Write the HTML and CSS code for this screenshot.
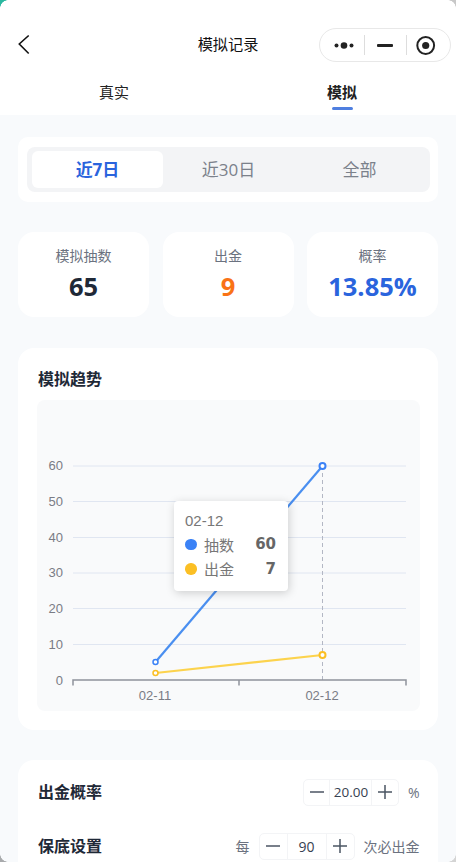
FILE: index.html
```html
<!DOCTYPE html>
<html lang="zh">
<head>
<meta charset="utf-8">
<title>模拟记录</title>
<link rel="stylesheet" href="styles.css">
</head>
<body>
<div class="window">
  <header class="topbar">
    <div class="navbar">
      <svg class="back" width="14" height="22" viewBox="0 0 14 22"><path d="M11.7 2.500 L2.300 11 L11.700 20.500" fill="none" stroke="#111" stroke-width="1.600"/></svg>
      <div class="nav-title">模拟记录</div>
      <div class="capsule">
        <svg class="cap-ic" width="44" height="12" viewBox="0 0 44 12"><circle cx="16.500" cy="6.500" r="2" fill="#222"/><circle cx="24" cy="6.500" r="3.300" fill="#222"/><circle cx="31.500" cy="6.500" r="2" fill="#222"/></svg>
        <span class="cap-sep"></span>
        <svg class="cap-ic" width="41" height="12" viewBox="0 0 41 12"><rect x="12" y="5" width="16" height="3" rx="1" fill="#222"/></svg>
        <span class="cap-sep"></span>
        <svg class="cap-ic" width="40" height="22" viewBox="0 0 40 22"><circle cx="18.700" cy="11.500" r="8.400" fill="none" stroke="#222" stroke-width="2"/><circle cx="18.700" cy="11.500" r="3.600" fill="#222"/></svg>
      </div>
    </div>
    <nav class="tabs">
      <div class="tab">真实</div>
      <div class="tab tab-on">模拟</div>
    </nav>
  </header>

  <main class="content">
    <section class="card range-card">
      <div class="range">
        <div class="range-item range-on">近7日</div>
        <div class="range-item">近30日</div>
        <div class="range-item">全部</div>
      </div>
    </section>

    <section class="stats">
      <div class="stat"><div class="stat-label">模拟抽数</div><div class="stat-value">65</div></div>
      <div class="stat"><div class="stat-label">出金</div><div class="stat-value orange">9</div></div>
      <div class="stat"><div class="stat-label">概率</div><div class="stat-value blue">13.85%</div></div>
    </section>

    <section class="card chart-card">
      <h2 class="card-title">模拟趋势</h2>
      <div class="chart">
        <svg class="chart-svg" width="383" height="311" viewBox="0 0 383 311">
          <g class="grid">
            <line x1="36" x2="369" y1="66" y2="66"/>
            <line x1="36" x2="369" y1="101.500" y2="101.500"/>
            <line x1="36" x2="369" y1="137.500" y2="137.500"/>
            <line x1="36" x2="369" y1="173" y2="173"/>
            <line x1="36" x2="369" y1="208.500" y2="208.500"/>
            <line x1="36" x2="369" y1="244.500" y2="244.500"/>
          </g>
          <g class="ylabels">
            <text x="26" y="70">60</text>
            <text x="26" y="105.500">50</text>
            <text x="26" y="141.500">40</text>
            <text x="26" y="177">30</text>
            <text x="26" y="212.500">20</text>
            <text x="26" y="248.500">10</text>
            <text x="26" y="284.500">0</text>
          </g>
          <line class="pointer" x1="285.500" x2="285.500" y1="66" y2="280"/>
          <path class="axis" d="M36 285.500 V280 H369 V285.500 M202 280 V285.500"/>
          <g class="xlabels">
            <text x="118" y="300">02-11</text>
            <text x="285" y="300">02-12</text>
          </g>
          <polyline class="line-blue" points="118.500,262 285.500,66"/>
          <polyline class="line-gold" points="118.500,273 285.500,255"/>
          <circle class="dot-blue" cx="118.500" cy="262" r="2.500"/>
          <circle class="dot-blue big" cx="285.500" cy="66" r="3"/>
          <circle class="dot-gold" cx="118.500" cy="273" r="2.500"/>
          <circle class="dot-gold big" cx="285.500" cy="255" r="3"/>
        </svg>
        <div class="tooltip">
          <div class="tip-head">02-12</div>
          <div class="tip-row"><span class="tip-dot tip-blue"></span><span class="tip-name">抽数</span><b class="tip-val">60</b></div>
          <div class="tip-row"><span class="tip-dot tip-gold"></span><span class="tip-name">出金</span><b class="tip-val">7</b></div>
        </div>
      </div>
    </section>

    <section class="card settings">
      <div class="set-row row-a">
        <div class="card-title">出金概率</div>
        <div class="set-ctl">
          <div class="stepper">
            <span class="step-btn">
              <svg width="14" height="14" viewBox="0 0 14 14"><path d="M0 7H14" stroke="#4b5563" stroke-width="1.500"/></svg>
            </span>
            <span class="step-val wide">20.00</span>
            <span class="step-btn">
              <svg width="14" height="14" viewBox="0 0 14 14"><path d="M0 7H14M7 0V14" stroke="#4b5563" stroke-width="1.500"/></svg>
            </span>
          </div>
          <span class="unit">%</span>
        </div>
      </div>
      <div class="set-row">
        <div class="card-title">保底设置</div>
        <div class="set-ctl">
          <span class="unit">每</span>
          <div class="stepper">
            <span class="step-btn">
              <svg width="14" height="14" viewBox="0 0 14 14"><path d="M0 7H14" stroke="#4b5563" stroke-width="1.500"/></svg>
            </span>
            <span class="step-val">90</span>
            <span class="step-btn">
              <svg width="14" height="14" viewBox="0 0 14 14"><path d="M0 7H14M7 0V14" stroke="#4b5563" stroke-width="1.500"/></svg>
            </span>
          </div>
          <span class="unit">次必出金</span>
        </div>
      </div>
    </section>
  </main>
  <span class="corner corner-tl"></span>
  <span class="corner corner-tr"></span>
  <span class="corner corner-bl"></span>
  <span class="corner corner-br"></span>
</div>
</body>
</html>
```

FILE: styles.css
```css
* { box-sizing: border-box; }
html, body { margin: 0; padding: 0; }
body {
  width: 456px;
  height: 862px;
  overflow: hidden;
  font-family: "Open Sans", "Noto Sans CJK SC", sans-serif;
  color: #1f2937;
  background: #f8fafc;
}
.window { position: relative; width: 456px; height: 862px; overflow: hidden; }

.topbar { background: #fff; height: 115px; }
.navbar {
  position: relative;
  height: 76px;
  padding: 28px 5px 0 0;
  display: flex;
  justify-content: flex-end;
}
.back { position: absolute; left: 17px; top: 33px; }
.nav-title {
  position: absolute;
  left: 0;
  right: 0;
  top: 33px;
  text-align: center;
  font-size: 15.200px;
  line-height: 22px;
  color: #111;
}
.capsule {
  width: 132px;
  height: 34px;
  border: 1px solid #e8e8e8;
  border-radius: 17px;
  display: flex;
  align-items: center;
  background: #fff;
}
.cap-ic { flex: none; }
.cap-sep { width: 1px; height: 20px; background: #ddd; flex: none; }

.tabs { display: flex; height: 39px; }
.tab {
  position: relative;
  flex: 1;
  text-align: center;
  font-size: 15px;
  line-height: 22px;
  padding-top: 5px;
  color: #222;
}
.tab:first-child { flex: 0 0 228px; }
.tab-on { font-weight: 700; }
.tab-on::after {
  content: "";
  position: absolute;
  left: 104px;
  top: 31px;
  width: 21px;
  height: 3px;
  border-radius: 2px;
  background: #4f7fe0;
}

.content { padding: 22px 18px 0; }
.card { background: #fff; }

.range-card { height: 65px; border-radius: 10px; padding: 10px 8px 10px 9px; }
.range {
  height: 45px;
  background: #f3f4f6;
  border-radius: 8px;
  padding: 4px 5px;
  display: flex;
}
.range-item {
  flex: 1;
  text-align: center;
  font-size: 17px;
  line-height: 37px;
  color: #7b818b;
  border-radius: 6px;
}
.range-on { background: #fff; color: #2a64dd; font-weight: 700; }

.stats { display: flex; gap: 13.500px; margin-top: 30px; }
.stat {
  flex: 1 1 0;
  height: 85px;
  background: #fff;
  border-radius: 16px;
  text-align: center;
  padding-top: 14px;
}
.stat-label { font-size: 14px; line-height: 20px; color: #6b7280; }
.stat-value { font-size: 25.500px; line-height: 34px; font-weight: 700; color: #1f2937; margin-top: 3px; }
.orange { color: #f97316; }
.blue { color: #2a64dd; }

.chart-card { margin-top: 31px; height: 382px; border-radius: 16px; padding: 19px 19px 0; }
.card-title { font-size: 16px; line-height: 24px; font-weight: 700; color: #1f2937; margin: 0 0 0 1px; }
.chart {
  position: relative;
  margin-top: 9px;
  width: 383px;
  height: 311px;
  background: #f9fafb;
  border-radius: 8px;
}
.chart-svg { display: block; font-family: "Liberation Sans", sans-serif; font-size: 13px; }
.grid line { stroke: #e0e6f1; stroke-width: 1; }
.ylabels text { fill: #7a7c85; text-anchor: end; }
.xlabels text { fill: #7a7c85; text-anchor: middle; }
.pointer { stroke: #b3b7c4; stroke-width: 1; stroke-dasharray: 4 3; }
.axis { fill: none; stroke: #8f939c; stroke-width: 1.500; }
.line-blue { fill: none; stroke: #4a8ff0; stroke-width: 2.200; }
.line-gold { fill: none; stroke: #fcd34d; stroke-width: 2.200; }
.dot-blue { fill: #fff; stroke: #3b82f6; stroke-width: 1.500; }
.dot-gold { fill: #fff; stroke: #fbbf24; stroke-width: 1.500; }
.big { stroke-width: 2; }

.tooltip {
  position: absolute;
  left: 137px;
  top: 100.500px;
  width: 114px;
  height: 90px;
  background: #fff;
  border-radius: 4px;
  box-shadow: 1px 2px 10px rgba(0,0,0,.18);
  padding: 11px 12px 0 11px;
  font-family: "Liberation Sans", "Noto Sans CJK SC", sans-serif;
  font-size: 15px;
  color: #777;
}
.tip-head { line-height: 18px; height: 18px; margin-bottom: 2.500px; }
.tip-row { display: flex; align-items: center; height: 24.500px; }
.tip-dot { width: 11.500px; height: 11.500px; border-radius: 50%; margin-right: 7.500px; flex: none; }
.tip-blue { background: #3b82f6; }
.tip-gold { background: #fbbf24; }
.tip-name { flex: 1; }
.tip-val { font-family: "DejaVu Sans", sans-serif; font-size: 15px; font-weight: 700; color: #666; }

.settings {
  margin-top: 30px;
  height: 160px;
  border-radius: 16px;
  padding: 18.500px 18.500px 0 19px;
}
.set-row { display: flex; align-items: center; justify-content: space-between; height: 27px; }
.row-a { margin-bottom: 27px; }
.set-ctl { display: flex; align-items: center; gap: 9px; }
.stepper {
  display: flex;
  align-items: center;
  width: 96px;
  height: 27px;
  border: 1px solid #f3f4f6;
  border-radius: 5px;
}
.step-btn {
  flex: 1;
  height: 25px;
  display: flex;
  align-items: center;
  justify-content: center;
}
.step-val {
  flex: none;
  width: 40px;
  height: 25px;
  line-height: 25px;
  text-align: center;
  font-size: 14px;
  color: #374151;
  border-left: 1px solid #f3f4f6;
  border-right: 1px solid #f3f4f6;
}
.step-val.wide { width: 43px; font-size: 13.500px; }
.unit { font-size: 14px; color: #6b7280; }

.corner { position: absolute; width: 8px; height: 8px; }
.corner-tl { left: 0; top: 0; background: radial-gradient(circle at 100% 100%, transparent 7.500px, #2bb8a0 8px); }
.corner-tr { right: 0; top: 0; background: radial-gradient(circle at 0 100%, transparent 7.500px, #c8c8c8 8px); }
.corner-bl { left: 0; bottom: 0; background: radial-gradient(circle at 100% 0, transparent 7.500px, #a8aaac 8px); }
.corner-br { right: 0; bottom: 0; background: radial-gradient(circle at 0 0, transparent 7.500px, #d4d4d4 8px); }
```
